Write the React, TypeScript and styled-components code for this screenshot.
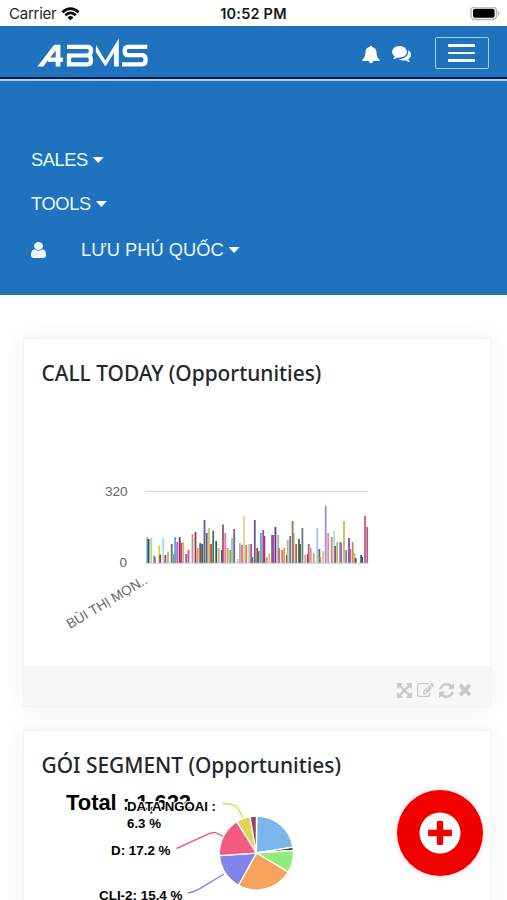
import React from "react";
import styled, { createGlobalStyle } from "styled-components";

const GlobalStyle = createGlobalStyle`
  * { box-sizing: border-box; }
  html, body { margin: 0; padding: 0; }
  body { background: #fff; width: 507px; height: 900px; overflow: hidden; font-family: "Liberation Sans", Arial, sans-serif; }
  svg { display: block; }
`;

const Screen = styled.div`
  width: 507px;
  height: 900px;
  overflow: hidden;
  background: #fefefe;
`;

const StatusBar = styled.div`
  height: 26px;
  display: grid;
  grid-template-columns: 1fr auto 1fr;
  align-items: center;
  padding: 2px 6px 0 9px;
  background: #fff;
  font: 400 15px/22px Inter, sans-serif;
  color: #262626;
`;

const Carrier = styled.div`
  display: flex;
  align-items: center;
  gap: 5px;
  letter-spacing: -0.25px;
`;

const Clock = styled.div`
  margin-right: 3px;
  font-weight: 600;
  font-size: 14.5px;
  letter-spacing: 0.2px;
  color: #171717;
`;

const Battery = styled.div`
  justify-self: end;
`;

const Navbar = styled.header`
  height: 56px;
  display: flex;
  align-items: center;
  padding: 0 18px 2px 37px;
  background: linear-gradient(#1f73be 51px, #001d4d 51px, #001d4d 53px, #b2d2ef 53px, #a4c8ea 55px, #1f73be 55px);
`;

const NavActions = styled.div`
  margin-left: auto;
  display: flex;
  align-items: center;
  gap: 12px;
  color: #fff;
`;

const NavIcon = styled.span`
  padding-top: 2px;
`;

const Toggle = styled.button`
  width: 54px;
  height: 32px;
  margin: 0 0 0 12px;
  padding: 0 12px;
  display: flex;
  flex-direction: column;
  justify-content: center;
  gap: 5px;
  background: none;
  border: 1.5px solid #a9cff2;
  border-radius: 2px;
`;

const ToggleLine = styled.span`
  height: 2.5px;
  width: 27px;
  border-radius: 1px;
  background: #fff;
`;

const Menu = styled.nav`
  height: 213px;
  padding: 66px 31px 0;
  background: #1f73be;
  color: #ecf8ff;
  font-size: 18.3px;
`;

const MenuItem = styled.div<{ $height: number }>`
  height: ${(p) => p.$height}px;
  display: flex;
  align-items: center;
  line-height: 24px;
`;

const MenuLabel = styled.span<{ $spacing?: number }>`
  letter-spacing: ${(p) => p.$spacing ?? 0}px;
`;

const UserIcon = styled.span`
  width: 50px;
`;

const Caret = styled.span`
  width: 11px;
  height: 6px;
  margin-left: 5px;
  background: #fff;
  clip-path: polygon(0 0, 100% 0, 50% 100%);
`;

const Content = styled.main`
  padding: 43px 16px 0 23px;
  display: flex;
  flex-direction: column;
  gap: 23px;
`;

const Card = styled.section<{ $height: number }>`
  width: 468px;
  height: ${(p) => p.$height}px;
  display: flex;
  flex-direction: column;
  background: #fff;
  border: 1px solid #f4f4f4;
  box-shadow: 0 0 20px rgba(0, 0, 0, 0.05);
`;

const CardTitle = styled.h2`
  margin: 0;
  padding: 17px 0 0 17.5px;
  height: 53px;
  font: 500 20.9px/34px "Noto Sans", sans-serif;
  color: #24272a;
`;

const ChartArea = styled.div`
  flex: 1;
  min-height: 0;
`;

const CardFooter = styled.footer`
  height: 40px;
  display: flex;
  align-items: center;
  justify-content: flex-end;
  gap: 5px;
  padding: 8px 19.5px 0 0;
  background: #f7f7f7;
  color: #c9c9c9;
`;

const AddButton = styled.button`
  position: fixed;
  left: 397px;
  top: 790px;
  width: 86px;
  height: 86px;
  padding: 0 1px 0 0;
  display: grid;
  place-items: center;
  border: 0;
  border-radius: 50%;
  background: #f00000;
  box-shadow: 0 0 9px rgba(255, 30, 0, 0.15);
`;

const paths = {
  comments:
    "M1408 768q0 139-94 257t-256.5 186.5-353.5 68.5q-86 0-176-16-124 88-278 128-36 9-86 16h-3q-11 0-20.5-8t-11.5-21q-1-3-1-6.5t.5-6.5 2-6l2.5-5 3.5-5.5 4-5 4.5-5 4-4.5q5-6 23-25t26-29.5 22.5-29 25-38.5 20.5-44q-124-72-195-177t-71-224q0-139 94-257t256.5-186.5 353.5-68.5 353.5 68.5 256.5 186.5 94 257zm384 256q0 120-71 224.5t-195 176.5q10 24 20.5 44t25 38.5 22.5 29 26 29.5 23 25q1 1 4 4.5t4.5 5 4 5 3.5 5.5l2.5 5 2 6 .5 6.5-1 6.5q-3 14-13 22t-22 7q-50-7-86-16-154-40-278-128-90 16-176 16-271 0-472-132 58 4 88 4 161 0 309-45t264-129q125-92 192-212t67-254q0-77-23-152 129 71 204 178t75 230z",
  user: "M1536 1399q0 109-62.5 187t-150.5 78h-854q-88 0-150.5-78t-62.5-187q0-85 8.5-160.5t31.5-152 58.5-131 94-89 134.5-34.5q131 128 313 128t313-128q76 0 134.5 34.5t94 89 58.5 131 31.5 152 8.5 160.5zm-256-887q0 159-112.5 271.5t-271.5 112.5-271.5-112.5-112.5-271.5 112.5-271.5 271.5-112.5 271.5 112.5 112.5 271.5z",
  expand:
    "M1283 413l-355 355 355 355 144-144q29-31 70-14 39 17 39 59v448q0 26-19 45t-45 19h-448q-42 0-59-40-17-39 14-69l144-144-355-355-355 355 144 144q31 30 14 69-17 40-59 40h-448q-26 0-45-19t-19-45v-448q0-42 40-59 39-17 69 14l144 144 355-355-355-355-144 144q-19 19-45 19-12 0-24-5-40-17-40-59v-448q0-26 19-45t45-19h448q42 0 59 40 17 39-14 69l-144 144 355 355 355-355-144-144q-31-30-14-69 17-40 59-40h448q26 0 45 19t19 45v448q0 42-39 59-13 5-25 5-26 0-45-19z",
  edit: "M888 1184l116-116-152-152-116 116v56h96v96h56zm440-720q-16-16-33 1l-350 350q-17 17-1 33t33-1l350-350q17-17 1-33zm80 594v190q0 119-84.5 203.5t-203.5 84.5h-832q-119 0-203.5-84.5t-84.5-203.5v-832q0-119 84.5-203.5t203.5-84.5h832q63 0 117 25 15 7 18 23 3 17-9 29l-49 49q-14 14-32 8-23-6-45-6h-832q-66 0-113 47t-47 113v832q0 66 47 113t113 47h832q66 0 113-47t47-113v-126q0-13 9-22l64-64q15-15 35-7t20 29zm-96-738l288 288-672 672h-288v-288zm444 132l-92 92-288-288 92-92q28-28 68-28t68 28l152 152q28 28 28 68t-28 68z",
  refresh:
    "M1639 1056q0 5-1 7-64 268-268 434.5t-478 166.5q-146 0-282.5-55t-243.5-157l-129 129q-19 19-45 19t-45-19-19-45v-448q0-26 19-45t45-19h448q26 0 45 19t19 45-19 45l-137 137q71 66 161 102t187 36q134 0 250-65t186-179q11-17 53-117 8-23 30-23h192q13 0 22.5 9.5t9.5 22.5zm25-800v448q0 26-19 45t-45 19h-448q-26 0-45-19t-19-45 19-45l138-138q-148-137-349-137-134 0-250 65t-186 179q-11 17-53 117-8 23-30 23h-199q-13 0-22.5-9.5t-9.5-22.5v-7q65-268 270-434.5t480-166.5q146 0 284 55.5t245 156.5l130-129q19-19 45-19t45 19 19 45z",
  close:
    "M1490 1322q0 40-28 68l-136 136q-28 28-68 28t-68-28l-294-294-294 294q-28 28-68 28t-68-28l-136-136q-28-28-28-68t28-68l294-294-294-294q-28-28-28-68t28-68l136-136q28-28 68-28t68 28l294 294 294-294q28-28 68-28t68 28l136 136q28 28 28 68t-28 68l-294 294 294 294q28 28 28 68z",
};

interface GlyphProps {
  name: keyof typeof paths;
  box: string;
  width: number;
  height: number;
}

const Glyph = ({ name, box, width, height }: GlyphProps) => (
  <svg width={width} height={height} viewBox={box} fill="currentColor" preserveAspectRatio="none">
    <path d={paths[name]} />
  </svg>
);

const WifiIcon = () => (
  <svg width="19" height="14" viewBox="0 0 19 14" fill="none" stroke="#050505" strokeWidth="2.7">
    <path d="M1.4 5.2Q9.5-2.1 17.6 5.2M4.3 8.3Q9.5 3.6 14.7 8.3" />
    <path d="M6.6 10.4Q9.5 7.8 12.4 10.4L9.5 13.3Z" fill="#050505" stroke="none" />
  </svg>
);

const BatteryIcon = () => (
  <svg width="31" height="15" viewBox="0 1 31 15">
    <rect x="1" y="1" width="25.5" height="12.5" rx="3.7" fill="#fff" stroke="#b4b4b4" strokeWidth="1.4" />
    <rect x="3" y="2.8" width="21.6" height="9" rx="2" fill="#000" />
    <path d="M28 5q3 2.3 0 4.6Z" fill="#aaa" />
  </svg>
);

const Logo = () => (
  <svg width="112" height="32" viewBox="37 34 112 32" fill="none" stroke="#fff" strokeWidth="4.3">
    <path d="M37.5 63.5 53.2 43Q54.2 41.8 55.8 41.8H60.4V63.5H55.7V47.5L43.3 63.5Z" fill="#fff" stroke="none" />
    <path d="M48 56.7H63" />
    <path d="M67 43.8H87.5Q91 43.8 91 47.4 91 51.4 87.5 52.2M67 52.3H87.5Q91 52.6 91 57.2 91 61.3 87.5 61.3H69V52" />
    <path d="M96 42 105.3 57.6 118.8 35.5V63.5H114V49.8L105.5 63.5 95.8 49Z" fill="#fff" stroke="none" />
    <path d="M147.3 43.8H128Q124.7 43.8 124.7 47.8 124.7 52.2 128 52.2H142.2Q145.6 52.2 145.6 56.8 145.6 61.3 142.2 61.3H122" />
    <path d="M65 50H89" stroke="#1f73be" strokeWidth=".5" />
  </svg>
);

const BellIcon = () => (
  <svg width="18" height="19" viewBox="0 0 18 20" fill="currentColor" preserveAspectRatio="none">
    <path d="M9 .7q1.3 0 1.3 1.5 3.7.9 4.2 5.2c.3 4.4.8 6.2 3.1 8.1v1.3H.4v-1.3c2.3-1.9 2.8-3.7 3.1-8.1.5-4.3 2.7-4.8 4.2-5.2Q7.7.7 9 .7ZM6.7 16.5h4.6q-.4 2.8-2.3 2.8t-2.3-2.8Z" />
  </svg>
);

type Bar = [number, number, string];

/* Each bar: horizontal position, height, colour. */
const bars: Bar[] = [
  [2, 26, "#7cb5ec"], [3.3, 24, "#434348"], [6, 25, "#90ed7d"], [9, 7.5, "#8085e9"], [9.7, 6, "#b46b62"],
  [14, 17.5, "#e4d354"], [15, 8.5, "#993c4c"], [18, 25, "#91e8e1"], [20.2, 8, "#b73868"], [22.8, 11.5, "#9bc16d"],
  [26.5, 19, "#6c6c6c"], [28.8, 9, "#659b43"], [30, 26, "#58a3e5"], [32, 21, "#a867cf"], [34.5, 26, "#9f244f"], [36, 20, "#af449c"], [38, 21, "#e8a84c"], [41, 9, "#50778b"], [43.3, 13, "#e23c9c"],
  [47.3, 29, "#90a890"], [50.3, 31, "#b22950"], [52.5, 15, "#ed9265"], [55, 20, "#725540"], [57, 19, "#2c6338"], [59.3, 43, "#5f5bad"], [61.5, 30, "#675d58"], [63.8, 35, "#c4c46e"], [65.8, 19, "#c83d4a"], [68, 32.5, "#367864"], [71, 22, "#285f4c"], [73.5, 15, "#f19966"], [76.6, 13, "#2361a0"], [77.8, 38.5, "#a35375"], [80, 30, "#ef76b3"], [82.4, 15, "#bca743"], [85, 13, "#8cad4a"], [86.8, 25, "#91bde8"], [89, 34, "#686969"],
  [92.5, 4, "#f4bd85"], [94.7, 20, "#a9a4ef"], [96.8, 18, "#e0758a"], [98.8, 47, "#e4da75"], [101, 18, "#da7b62"], [104, 19, "#8bddcf"], [105.9, 19, "#dc4c77"], [107.2, 6, "#55804e"], [109.6, 43, "#7354a3"], [112, 15, "#6d625a"], [113.4, 12, "#7f672c"], [115.7, 30, "#57a6dc"], [118, 33, "#a546ba"], [119.2, 27, "#b42f61"], [121.5, 6, "#d3975e"], [124, 10, "#efbd53"], [127, 28, "#34509a"], [128, 28, "#d73cb7"], [130.2, 36, "#484781"], [133, 28, "#8fbd8d"], [134, 15, "#d2667b"], [137, 13, "#c77974"], [139, 15, "#e69367"], [141.7, 8, "#615331"], [142.5, 23, "#b7bd75"], [144.9, 27, "#647bb5"], [147.4, 42, "#828247"], [148.4, 30, "#ab8e66"], [151, 19, "#d05549"], [153.8, 24, "#367645"], [154.8, 19, "#226c54"], [157.2, 35, "#797783"], [160, 8, "#ed9a78"], [162.6, 9, "#39608a"], [163.5, 19, "#b95f7b"], [165.6, 15, "#ef86b0"], [168.5, 10, "#cda93d"], [172, 35, "#a1c9ed"], [174.2, 14, "#5e6960"], [175.2, 6, "#9cae53"], [178, 12, "#ebbb82"], [180.5, 57, "#9d8ee0"], [183, 30, "#e887a9"], [186.5, 26, "#b5917f"], [189, 32, "#a2e3dc"], [190, 17, "#b24063"], [192, 21, "#a8bf88"], [195, 21, "#76a158"], [196, 20, "#b25cbb"], [198.8, 42, "#d3b663"], [201, 13, "#5288b2"], [203.8, 25, "#8946ab"], [205, 14, "#db4e78"], [207.5, 21, "#a69074"], [209.2, 10, "#e6a93b"], [210.5, 5, "#3f6159"], [216, 8, "#374579"], [217, 6, "#296e4d"], [219.8, 47, "#e9536c"], [222, 36, "#9367ae"],
];

/* The bar chart's drawing area starts at the left edge of its card. */
const CallsChart = () => (
  <svg width="466" height="274" viewBox="24 392 466 274" fontFamily='"Liberation Sans", sans-serif' fill="#666">
    <path d="M145 491.3H368" stroke="#dedede" strokeWidth="1.2" />
    <text x="105" y="495.7" fontSize="13.6">320</text>
    <text x="119.5" y="566.7" fontSize="13.6">0</text>
    <g>
      {bars.map(([x, height, color], i) => (
        <rect key={i} x={144.3 + x} y={563 - height} width="1.8" height={height} fill={color} />
      ))}
    </g>
    <path d="M145 563.3H368" stroke="#c5d2e4" strokeWidth="1" />
    <text transform="translate(70 629) rotate(-30.5)" fontSize="13.6" textLength="91" lengthAdjust="spacingAndGlyphs">
      BÙI THỊ MỌN..
    </text>
  </svg>
);

const slices: [number, number, string][] = [
  [1, 81, "#7cb5ec"],
  [81, 86, "#434348"],
  [86, 121, "#90ed7d"],
  [121, 209, "#f7a35c"],
  [209, 266, "#8085e9"],
  [266, 328, "#f15c80"],
  [328, 350, "#e4d354"],
  [350, 360, "#8d4653"],
];

const slicePath = (from: number, to: number) => {
  const point = (deg: number) => {
    const a = (deg * Math.PI) / 180;
    return `${256.4 + 37 * Math.sin(a)} ${853 - 37 * Math.cos(a)}`;
  };
  return `M256.4 853L${point(from)}A37 37 0 0 1 ${point(to)}Z`;
};

const SegmentChart = () => (
  <svg width="466" height="118" viewBox="24 784 466 118" fontFamily='"Liberation Sans", sans-serif' fontWeight="700" fill="#000">
    <text x="66" y="810" fontSize="21.5" textLength="125" lengthAdjust="spacingAndGlyphs">Total : 1,622</text>
    <g stroke="#fff" strokeWidth="1.3">
      {slices.map(([from, to, color]) => (
        <path key={from} d={slicePath(from, to)} fill={color} />
      ))}
    </g>
    <g fill="none" strokeWidth="1.4">
      <path d="M222.5 803.5C236 803.5 238 806 242.5 818" stroke="#e4d354" />
      <path d="M176.5 848.5L208 834.2C214 831.5 216 832 223 836.5" stroke="#f15c80" />
      <path d="M188 893C199 891 203 886 224 874" stroke="#8085e9" />
    </g>
    <g fontSize="12.5" stroke="#fff" strokeWidth="2" strokeLinejoin="round" paintOrder="stroke">
      <text x="127" y="811" textLength="89" lengthAdjust="spacingAndGlyphs">DATA NGOAI :</text>
      <text x="127" y="828" textLength="34" lengthAdjust="spacingAndGlyphs">6.3 %</text>
      <text x="111" y="855" textLength="59.5" lengthAdjust="spacingAndGlyphs">D: 17.2 %</text>
      <text x="99" y="900" textLength="83.5" lengthAdjust="spacingAndGlyphs">CLI-2: 15.4 %</text>
    </g>
  </svg>
);

export default function App() {
  return (
    <Screen>
      <GlobalStyle />
      <StatusBar>
        <Carrier>Carrier <WifiIcon /></Carrier>
        <Clock>10:52 PM</Clock>
        <Battery><BatteryIcon /></Battery>
      </StatusBar>
      <Navbar>
        <Logo />
        <NavActions>
          <NavIcon><BellIcon /></NavIcon>
          <NavIcon><Glyph name="comments" box="0 256 1792 1408" width={19} height={16} /></NavIcon>
          <Toggle aria-label="Toggle navigation">
            <ToggleLine />
            <ToggleLine />
            <ToggleLine />
          </Toggle>
        </NavActions>
      </Navbar>
      <Menu>
        <MenuItem $height={24}><MenuLabel $spacing={-0.45}>SALES</MenuLabel><Caret /></MenuItem>
        <MenuItem $height={64}><MenuLabel $spacing={-0.35}>TOOLS</MenuLabel><Caret /></MenuItem>
        <MenuItem $height={28}>
          <UserIcon><Glyph name="user" box="256 128 1280 1536" width={15} height={16} /></UserIcon>
          <MenuLabel>LƯU PHÚ QUỐC</MenuLabel>
          <Caret />
        </MenuItem>
      </Menu>
      <Content>
        <Card $height={369}>
          <CardTitle>CALL TODAY (Opportunities)</CardTitle>
          <ChartArea><CallsChart /></ChartArea>
          <CardFooter>
            <Glyph name="expand" box="0 0 1536 1536" width={15} height={15} />
            <Glyph name="edit" box="0 128 1792 1408" width={17} height={14} />
            <Glyph name="refresh" box="128 128 1536 1536" width={15} height={15} />
            <Glyph name="close" box="302 366 1188 1188" width={12} height={12} />
          </CardFooter>
        </Card>
        <Card $height={220}>
          <CardTitle>GÓI SEGMENT (Opportunities)</CardTitle>
          <ChartArea><SegmentChart /></ChartArea>
        </Card>
      </Content>
      <AddButton aria-label="Add">
        <svg width="42" height="42" viewBox="0 0 42 42">
          <circle cx="21" cy="21" r="20.5" fill="#fff" />
          <rect x="9" y="17.8" width="24" height="6.4" rx="1.3" fill="#f00000" />
          <rect x="17.8" y="9" width="6.4" height="24" rx="1.3" fill="#f00000" />
        </svg>
      </AddButton>
    </Screen>
  );
}
